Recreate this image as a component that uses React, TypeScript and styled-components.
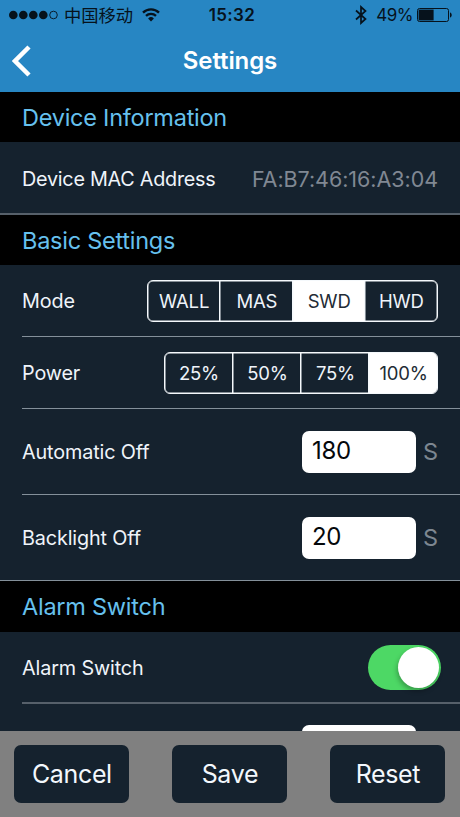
import React, { useState } from 'react';
import styled, { createGlobalStyle } from 'styled-components';

const NAVY = '#15222e';

const GlobalStyle = createGlobalStyle`
  * { box-sizing: border-box; }
  body {
    margin: 0;
    background: ${NAVY};
    font-family: Inter, "Noto Sans CJK SC", sans-serif;
    overflow: hidden;
  }
  button, input { font-family: inherit; margin: 0; padding: 0; border: 0; }
`;

const Screen = styled.div`
  width: 460px;
  height: 817px;
  display: flex;
  flex-direction: column;
  overflow: hidden;
  background: ${NAVY};
`;

const Header = styled.header`
  flex: none;
  height: 92px;
  background: #2786c3;
`;

const StatusBar = styled.div`
  height: 30px;
  padding: 0 8px 0 9px;
  display: grid;
  grid-template-columns: 1fr auto 1fr;
  align-items: center;
  color: #06121c;
`;

const StatusGroup = styled.div<{ $end?: boolean }>`
  display: flex;
  align-items: center;
  justify-content: ${p => (p.$end ? 'flex-end' : 'flex-start')};
`;

const Carrier = styled.span`
  margin: 0 9px 0 6px;
  font: 400 17.3px/28px "Noto Sans CJK SC", sans-serif;
`;

const Clock = styled.span`
  padding-left: 3px;
  font-size: 17px;
  font-weight: 600;
  letter-spacing: 0.35px;
`;

const Percent = styled.span`
  margin: 0 4px 0 9px;
  font-size: 17px;
  letter-spacing: -0.5px;
`;

const NavBar = styled.div`
  height: 62px;
  padding: 0 12px;
  display: grid;
  grid-template-columns: 20px 1fr 20px;
  align-items: center;
`;

const BackButton = styled.button`
  display: flex;
  background: none;
`;

const Title = styled.h1`
  margin: 0;
  color: #fff;
  font-size: 24px;
  font-weight: 600;
  line-height: 62px;
  letter-spacing: -0.1px;
  text-align: center;
`;

const Content = styled.main`
  flex: 1;
  min-height: 0;
  overflow: hidden;
`;

const SectionTitle = styled.h2<{ $height?: number }>`
  height: ${p => p.$height ?? 50}px;
  margin: 0;
  padding-left: 22px;
  background: #000;
  color: #66c0ee;
  font-size: 23.5px;
  font-weight: 400;
  line-height: 51px;
  letter-spacing: -0.25px;
`;

const Row = styled.div<{ $height: number; $full?: boolean; $soft?: boolean }>`
  height: ${p => p.$height}px;
  margin-left: ${p => (p.$full ? 0 : 22)}px;
  padding: 0 22px 0 ${p => (p.$full ? 22 : 0)}px;
  border-bottom: ${p => (p.$soft ? '2px solid #56606a' : '1px solid #84909a')};
  display: flex;
  align-items: center;
  justify-content: space-between;
`;

const Label = styled.span<{ $tight?: boolean }>`
  padding-top: ${p => (p.$tight ? 3 : 1)}px;
  color: #eff4fa;
  font-size: 19.8px;
  font-weight: 400;
  letter-spacing: ${p => (p.$tight ? -0.25 : -0.13)}px;
`;

const Address = styled.span`
  padding-top: 2px;
  color: #808893;
  font-size: 21.5px;
  font-weight: 400;
  letter-spacing: -0.05px;
`;

const Segments = styled.div<{ $width: number }>`
  width: ${p => p.$width}px;
  height: 42px;
  display: grid;
  grid-auto-flow: column;
  grid-auto-columns: 1fr;
  border: 1px solid #f5f9fc;
  box-shadow: inset 0 0 0 0.5px #f5f9fc;
  border-radius: 6px;
  overflow: hidden;
`;

const Segment = styled.button<{ $active: boolean }>`
  padding-left: 1px;
  background: ${p => (p.$active ? '#fff' : 'transparent')};
  color: ${p => (p.$active ? '#222b35' : '#eff4fa')};
  font-size: 18.5px;
  font-weight: 400;
  letter-spacing: -0.2px;
  &:first-child { padding-left: 0; }
  & + & { box-shadow: -1px 0 0 0 #f5f9fc, inset 0.5px 0 0 0 #f5f9fc; }
`;

const Field = styled.div`
  display: flex;
  align-items: center;
  gap: 8px;
`;

const NumberInput = styled.input`
  width: 114px;
  height: 42px;
  padding: 0 10px 3px;
  border-radius: 7px;
  background: #fff;
  color: #05080b;
  font-size: 24px;
  font-weight: 400;
  letter-spacing: -0.3px;
  outline: none;
`;

const Unit = styled.span`
  width: 14px;
  color: #7d8791;
  font-size: 23.5px;
  font-weight: 400;
  text-indent: -1px;
`;

const Toggle = styled.button<{ $on: boolean }>`
  width: 73px;
  height: 45px;
  margin: 1px -3px 0 0;
  padding: 2px;
  display: flex;
  justify-content: ${p => (p.$on ? 'flex-end' : 'flex-start')};
  border-radius: 23px;
  background: ${p => (p.$on ? '#4dd865' : '#7d8791')};
`;

const Knob = styled.span`
  width: 41px;
  height: 41px;
  border-radius: 50%;
  background: #fff;
  box-shadow: -1px 3px 5px rgba(0, 0, 0, 0.28);
`;

const Footer = styled.footer`
  flex: none;
  height: 86px;
  padding: 14px 14.6px 0 14.4px;
  display: flex;
  justify-content: space-between;
  align-items: flex-start;
  background: #808080;
`;

const Action = styled.button`
  width: 115px;
  height: 57.5px;
  border-radius: 7px;
  background: ${NAVY};
  color: #f3f8fd;
  font-size: 25px;
  font-weight: 400;
  letter-spacing: -0.35px;
`;

const SignalDots = () => (
  <svg width="49" height="10" viewBox="0 0 49 10" fill="#06121c">
    {[4.3, 14.3, 24.3, 34.3].map(x => <circle key={x} cx={x} cy="5" r="4.3" />)}
    <circle cx="44.5" cy="5" r="3.8" fill="none" stroke="#06121c" strokeWidth="0.9" />
  </svg>
);

const Wifi = () => (
  <svg width="18" height="14" viewBox="0 0 18 14" fill="none" stroke="#06121c" strokeWidth="2.3">
    <path d="M1 4.6a11.3 11.3 0 0 1 16 0" />
    <path d="M4 7.9a7.1 7.1 0 0 1 10 0" />
    <path d="M9 13.6 6.1 10.4a4.1 4.1 0 0 1 5.8 0Z" fill="#06121c" stroke="none" />
  </svg>
);

const Bluetooth = () => (
  <svg width="12" height="20" viewBox="0 0 12 20" fill="none" stroke="#06121c" strokeWidth="1.7">
    <path d="M1 5.5 10.5 14 6 18V2l4.5 4L1 14.5" />
  </svg>
);

const Battery = () => (
  <svg width="35" height="14" viewBox="0 0 35 14" fill="#06121c">
    <rect x="0.5" y="0.5" width="31" height="13" rx="2" fill="none" stroke="#06121c" />
    <rect x="1.6" y="1.6" width="15" height="10.8" />
    <path d="M33 4.5c2.3.5 2.3 4.5 0 5Z" />
  </svg>
);

const BackArrow = () => (
  <svg width="20" height="32" viewBox="0 0 20 32" fill="none" stroke="#fff" strokeWidth="4.5">
    <path d="M17 2 3 16 17 30" />
  </svg>
);

function SegmentedControl({ options, initial, width }: { options: string[]; initial: string; width: number }) {
  const [value, setValue] = useState(initial);
  return (
    <Segments $width={width}>
      {options.map(o => (
        <Segment key={o} $active={o === value} onClick={() => setValue(o)}>{o}</Segment>
      ))}
    </Segments>
  );
}

function SecondsField({ initial, unit = '' }: { initial: string; unit?: string }) {
  const [value, setValue] = useState(initial);
  return (
    <Field>
      <NumberInput value={value} onChange={e => setValue(e.target.value)} />
      <Unit>{unit}</Unit>
    </Field>
  );
}

export default function App() {
  const [alarm, setAlarm] = useState(true);
  return (
    <>
      <GlobalStyle />
      <Screen>
        <Header>
          <StatusBar>
            <StatusGroup>
              <SignalDots />
              <Carrier>中国移动</Carrier>
              <Wifi />
            </StatusGroup>
            <Clock>15:32</Clock>
            <StatusGroup $end>
              <Bluetooth />
              <Percent>49%</Percent>
              <Battery />
            </StatusGroup>
          </StatusBar>
          <NavBar>
            <BackButton aria-label="Back"><BackArrow /></BackButton>
            <Title>Settings</Title>
          </NavBar>
        </Header>
        <Content>
          <SectionTitle>Device Information</SectionTitle>
          <Row $height={73} $full $soft>
            <Label $tight>Device MAC Address</Label>
            <Address>FA:B7:46:16:A3:04</Address>
          </Row>
          <SectionTitle>Basic Settings</SectionTitle>
          <Row $height={72}>
            <Label>Mode</Label>
            <SegmentedControl options={['WALL', 'MAS', 'SWD', 'HWD']} initial="SWD" width={291} />
          </Row>
          <Row $height={72}>
            <Label>Power</Label>
            <SegmentedControl options={['25%', '50%', '75%', '100%']} initial="100%" width={274} />
          </Row>
          <Row $height={86}>
            <Label>Automatic Off</Label>
            <SecondsField initial="180" unit="S" />
          </Row>
          <Row $height={86} $full>
            <Label>Backlight Off</Label>
            <SecondsField initial="20" unit="S" />
          </Row>
          <SectionTitle $height={51}>Alarm Switch</SectionTitle>
          <Row $height={72} $soft>
            <Label>Alarm Switch</Label>
            <Toggle $on={alarm} aria-label="Alarm Switch" onClick={() => setAlarm(!alarm)}><Knob /></Toggle>
          </Row>
          <Row $height={85}>
            <Label />
            <SecondsField initial="" />
          </Row>
        </Content>
        <Footer>
          <Action>Cancel</Action>
          <Action>Save</Action>
          <Action>Reset</Action>
        </Footer>
      </Screen>
    </>
  );
}
